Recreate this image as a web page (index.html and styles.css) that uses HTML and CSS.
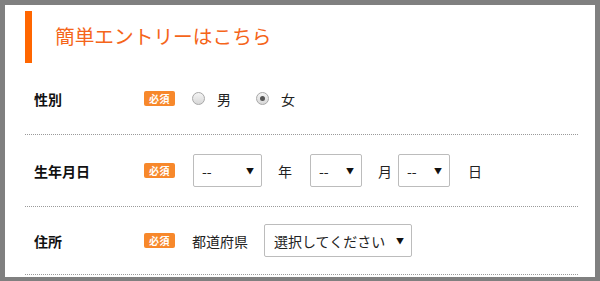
FILE: index.html
```html
<!DOCTYPE html>
<html lang="ja">
<head>
<meta charset="utf-8">
<link rel="stylesheet" href="styles.css">
</head>
<body>
<div class="panel">
  <h2 class="heading"><span class="heading-text">簡単エントリーはこちら</span></h2>
  <div class="row">
    <div class="label">性別</div>
    <span class="badge">必須</span>
    <div class="field">
      <span class="radio"></span><span class="opt">男</span>
      <span class="radio checked"></span><span class="opt">女</span>
    </div>
  </div>
  <div class="row">
    <div class="label">生年月日</div>
    <span class="badge">必須</span>
    <div class="field">
      <div class="select w-year first"><span>--</span><span class="arrow">▼</span></div>
      <span class="unit u-year">年</span>
      <div class="select w-small"><span>--</span><span class="arrow">▼</span></div>
      <span class="unit u-month">月</span>
      <div class="select w-small"><span>--</span><span class="arrow">▼</span></div>
      <span class="unit u-day">日</span>
    </div>
  </div>
  <div class="row row-last">
    <div class="label">住所</div>
    <span class="badge">必須</span>
    <div class="field">
      <span class="pref">都道府県</span>
      <div class="select w-pref"><span>選択してください</span><span class="arrow">▼</span></div>
    </div>
  </div>
</div>
</body>
</html>
```
FILE: styles.css
```css
html, body {
  margin: 0;
  padding: 0;
}
body {
  background: #808080;
  padding: 5px;
  height: 281px;
  box-sizing: border-box;
  font-family: "Noto Sans CJK JP", "Noto Sans", sans-serif;
  color: #222;
}
.panel {
  background: #fff;
  width: 590px;
  padding: 6px 17px 2px 20px;
  box-sizing: border-box;
}
.heading {
  margin: 0;
  height: 52px;
  border-left: 7px solid #ff6600;
  display: flex;
  align-items: center;
  padding-left: 23px;
  padding-bottom: 3px;
  box-sizing: border-box;
}
.heading-text {
  font-size: 19.7px;
  font-weight: normal;
  color: #f5651a;
  line-height: 1;
}
.row {
  display: flex;
  align-items: center;
  height: 72px;
  box-sizing: border-box;
  border-bottom: 1px dotted #9a9a9a;
  padding-left: 9px;
}
.row-last {
  height: 68px;
}
.label {
  width: 110px;
  font-size: 14px;
  font-weight: bold;
  color: #111;
  line-height: 1;
}
.badge {
  width: 31px;
  height: 15px;
  background: #f7882b;
  color: #fff;
  font-size: 10px;
  font-weight: bold;
  line-height: 15px;
  text-align: center;
  border-radius: 2px;
  letter-spacing: 0.5px;
  margin-right: 17px;
}
.field {
  display: flex;
  align-items: center;
  font-size: 14px;
  line-height: 1;
  color: #222;
}
.radio {
  width: 13px;
  height: 13px;
  border-radius: 50%;
  box-sizing: border-box;
  border: 1px solid #a8a8a8;
  background: linear-gradient(#f4f4f4, #d8d8d8);
  display: flex;
  align-items: center;
  justify-content: center;
  margin-right: 12px;
}
.radio.checked::after {
  content: "";
  width: 5px;
  height: 5px;
  border-radius: 50%;
  background: #555;
}
.opt {
  margin-right: 25px;
}
.select {
  height: 33px;
  box-sizing: border-box;
  border: 1px solid #bcbcbc;
  border-radius: 2px;
  display: flex;
  align-items: center;
  justify-content: space-between;
  padding: 0 7px 0 8px;
  font-size: 14px;
  color: #222;
}
.first { margin-left: 1px; }
.arrow {
  font-size: 8px;
  color: #111;
}
.w-year { width: 69px; }
.w-small { width: 52px; }
.w-pref { width: 148px; padding-left: 9px; }
.u-year { margin: 0 18px 0 16px; }
.u-month { margin: 0 6px 0 16px; }
.u-day { margin-left: 18px; }
.pref { margin-right: 16px; }
```
